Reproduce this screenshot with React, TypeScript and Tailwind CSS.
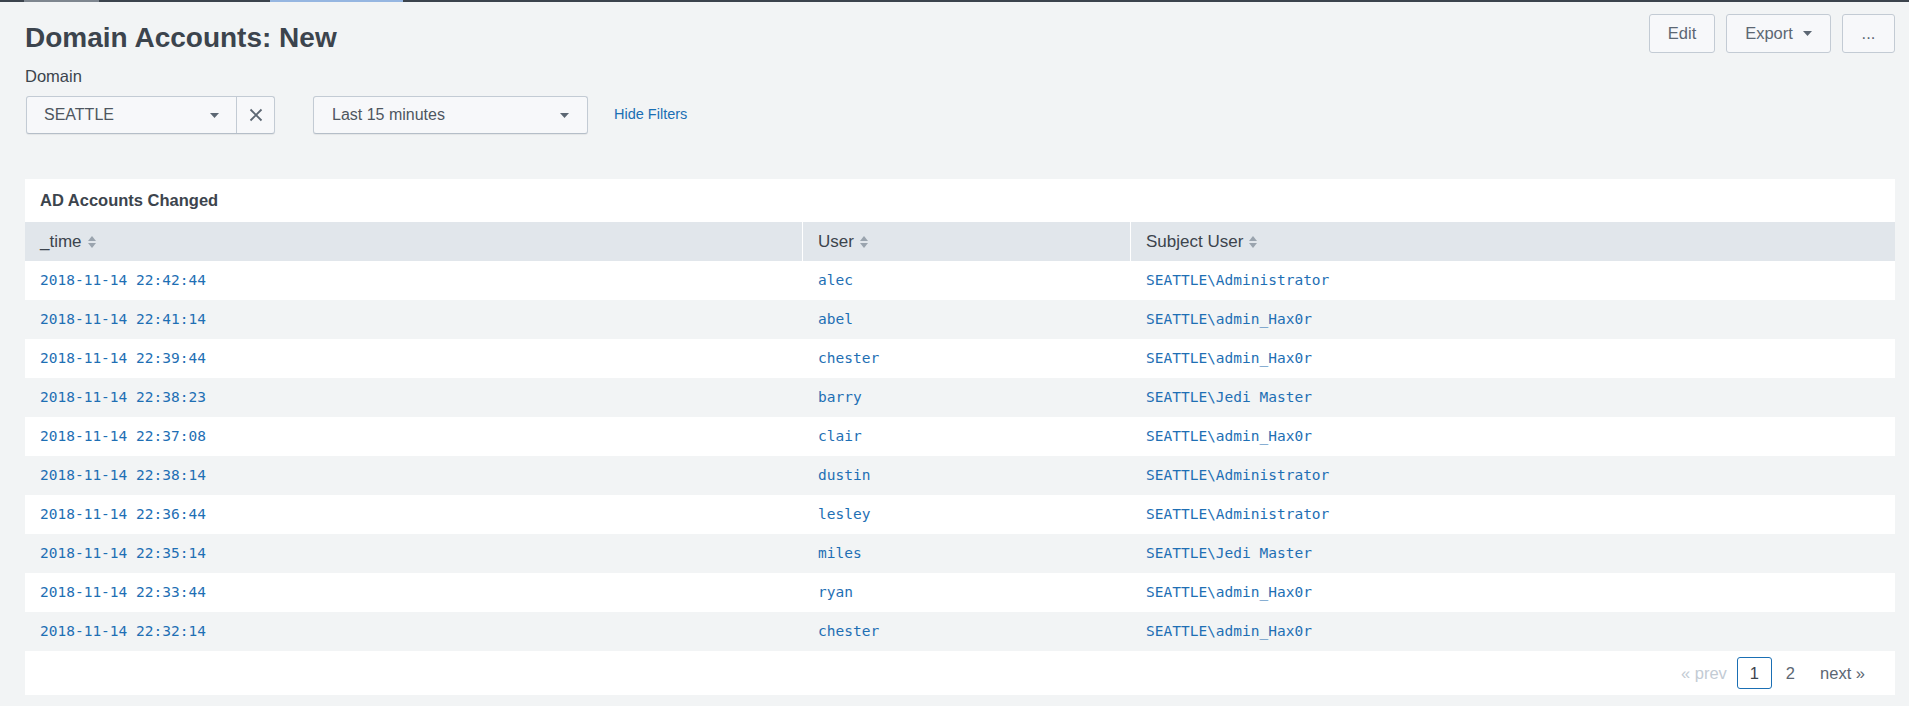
import React from "react";

type Row = {
  time: string;
  user: string;
  subject: string;
};

const rows: Row[] = [
  { time: "2018-11-14 22:42:44", user: "alec", subject: "SEATTLE\\Administrator" },
  { time: "2018-11-14 22:41:14", user: "abel", subject: "SEATTLE\\admin_Hax0r" },
  { time: "2018-11-14 22:39:44", user: "chester", subject: "SEATTLE\\admin_Hax0r" },
  { time: "2018-11-14 22:38:23", user: "barry", subject: "SEATTLE\\Jedi Master" },
  { time: "2018-11-14 22:37:08", user: "clair", subject: "SEATTLE\\admin_Hax0r" },
  { time: "2018-11-14 22:38:14", user: "dustin", subject: "SEATTLE\\Administrator" },
  { time: "2018-11-14 22:36:44", user: "lesley", subject: "SEATTLE\\Administrator" },
  { time: "2018-11-14 22:35:14", user: "miles", subject: "SEATTLE\\Jedi Master" },
  { time: "2018-11-14 22:33:44", user: "ryan", subject: "SEATTLE\\admin_Hax0r" },
  { time: "2018-11-14 22:32:14", user: "chester", subject: "SEATTLE\\admin_Hax0r" },
];

function Caret() {
  return (
    <svg width="9" height="5" viewBox="0 0 9 5" className="shrink-0">
      <path d="M0 0h9L4.5 5z" fill="#5c6773" />
    </svg>
  );
}

function SortIcon() {
  return (
    <svg width="8" height="12" viewBox="0 0 8 12" className="ml-[6px] shrink-0">
      <path d="M0 5L4 0L8 5z" fill="#9aa4ae" />
      <path d="M0 7h8L4 12z" fill="#9aa4ae" />
    </svg>
  );
}

function HeaderCell({ label, first }: { label: string; first?: boolean }) {
  return (
    <div
      className={`flex items-center h-[39px] pl-[15px] text-[17px] text-[#3c444d] ${
        first ? "" : "border-l border-white"
      }`}
    >
      {label}
      <SortIcon />
    </div>
  );
}

function App() {
  return (
    <div className="min-h-screen bg-[#f2f4f5] font-['Liberation_Sans',Arial,sans-serif]">
      {/* top nav strip */}
      <div className="flex h-[2px] bg-[#3c444d]">
        <div className="w-[24px]" />
        <div className="w-[75px] bg-[#7e868f]" />
        <div className="w-[171px]" />
        <div className="w-[133px] bg-[#96b6e1]" />
      </div>

      <div className="pl-[25px] pr-[14px] pt-[12px]">
        <div className="flex justify-between items-start">
          <div>
            <h1 className="mt-[7px] text-[28px] leading-[34px] font-semibold text-[#3c444d]">
              Domain Accounts: New
            </h1>
            <div className="mt-[11px] text-[16.5px] leading-[20px] text-[#3c444d]">Domain</div>
            <div className="mt-[10px] flex items-center">
              <div className="ml-[1px] flex h-[38px] w-[249px] rounded-[3px] border border-[#c3cbd4] border-b-[#b5bec8] bg-[#f7f8fa] shadow-[0_1px_1px_rgba(0,0,0,0.06)]">
                <div className="flex flex-1 items-center justify-between pl-[17px] pr-[17px] text-[16px] text-[#4e5660]">
                  <span>SEATTLE</span>
                  <Caret />
                </div>
                <div className="flex w-[38px] items-center justify-center border-l border-[#c3cbd4]">
                  <svg width="14" height="14" viewBox="0 0 14 14">
                    <path d="M1.5 1.5L12.5 12.5M12.5 1.5L1.5 12.5" stroke="#5c6773" strokeWidth="1.8" />
                  </svg>
                </div>
              </div>
              <div className="ml-[38px] flex h-[38px] w-[275px] items-center justify-between rounded-[3px] border border-[#c3cbd4] border-b-[#b5bec8] bg-[#f7f8fa] pl-[18px] pr-[18px] text-[16px] text-[#4e5660] shadow-[0_1px_1px_rgba(0,0,0,0.06)]">
                <span>Last 15 minutes</span>
                <Caret />
              </div>
              <a className="ml-[26px] text-[14.5px] text-[#1a6fb4]">Hide Filters</a>
            </div>
          </div>

          <div className="flex items-center gap-[11px] text-[16.5px] text-[#5c6773]">
            <button className="h-[39px] w-[66px] rounded-[3px] border border-[#c3cbd4] bg-[#f7f8fa]">
              Edit
            </button>
            <button className="flex h-[39px] w-[105px] items-center justify-center gap-[10px] rounded-[3px] border border-[#c3cbd4] bg-[#f7f8fa]">
              Export
              <Caret />
            </button>
            <button className="h-[39px] w-[53px] rounded-[3px] border border-[#c3cbd4] bg-[#f7f8fa]">
              ...
            </button>
          </div>
        </div>

        {/* panel */}
        <div className="mt-[45px] bg-white">
          <div className="h-[43px] pl-[15px] text-[16.5px] leading-[43px] font-bold text-[#3c444d]">
            AD Accounts Changed
          </div>
          <div className="grid grid-cols-[777px_328px_1fr] bg-[#e1e6eb]">
            <HeaderCell label="_time" first />
            <HeaderCell label="User" />
            <HeaderCell label="Subject User" />
          </div>
          {rows.map((r, i) => (
            <div
              key={i}
              className={`grid h-[39px] grid-cols-[777px_328px_1fr] items-center font-['DejaVu_Sans_Mono',monospace] text-[14.5px] text-[#1e6fb4] ${
                i % 2 === 1 ? "bg-[#f2f4f5]" : "bg-white"
              }`}
            >
              <div className="pl-[15px]">{r.time}</div>
              <div className="pl-[16px]">{r.user}</div>
              <div className="pl-[16px]">{r.subject}</div>
            </div>
          ))}
          <div className="flex h-[44px] items-center justify-end pr-[30px] text-[16.5px]">
            <span className="text-[#c3cbd4]">« prev</span>
            <span className="ml-[10px] flex h-[32px] w-[35px] items-center justify-center rounded-[3px] border border-[#1a6fb4] text-[#3c444d]">
              1
            </span>
            <span className="ml-[14px] text-[#5c6773]">2</span>
            <span className="ml-[25px] text-[#5c6773]">next »</span>
          </div>
        </div>
      </div>
    </div>
  );
}

export default App;
